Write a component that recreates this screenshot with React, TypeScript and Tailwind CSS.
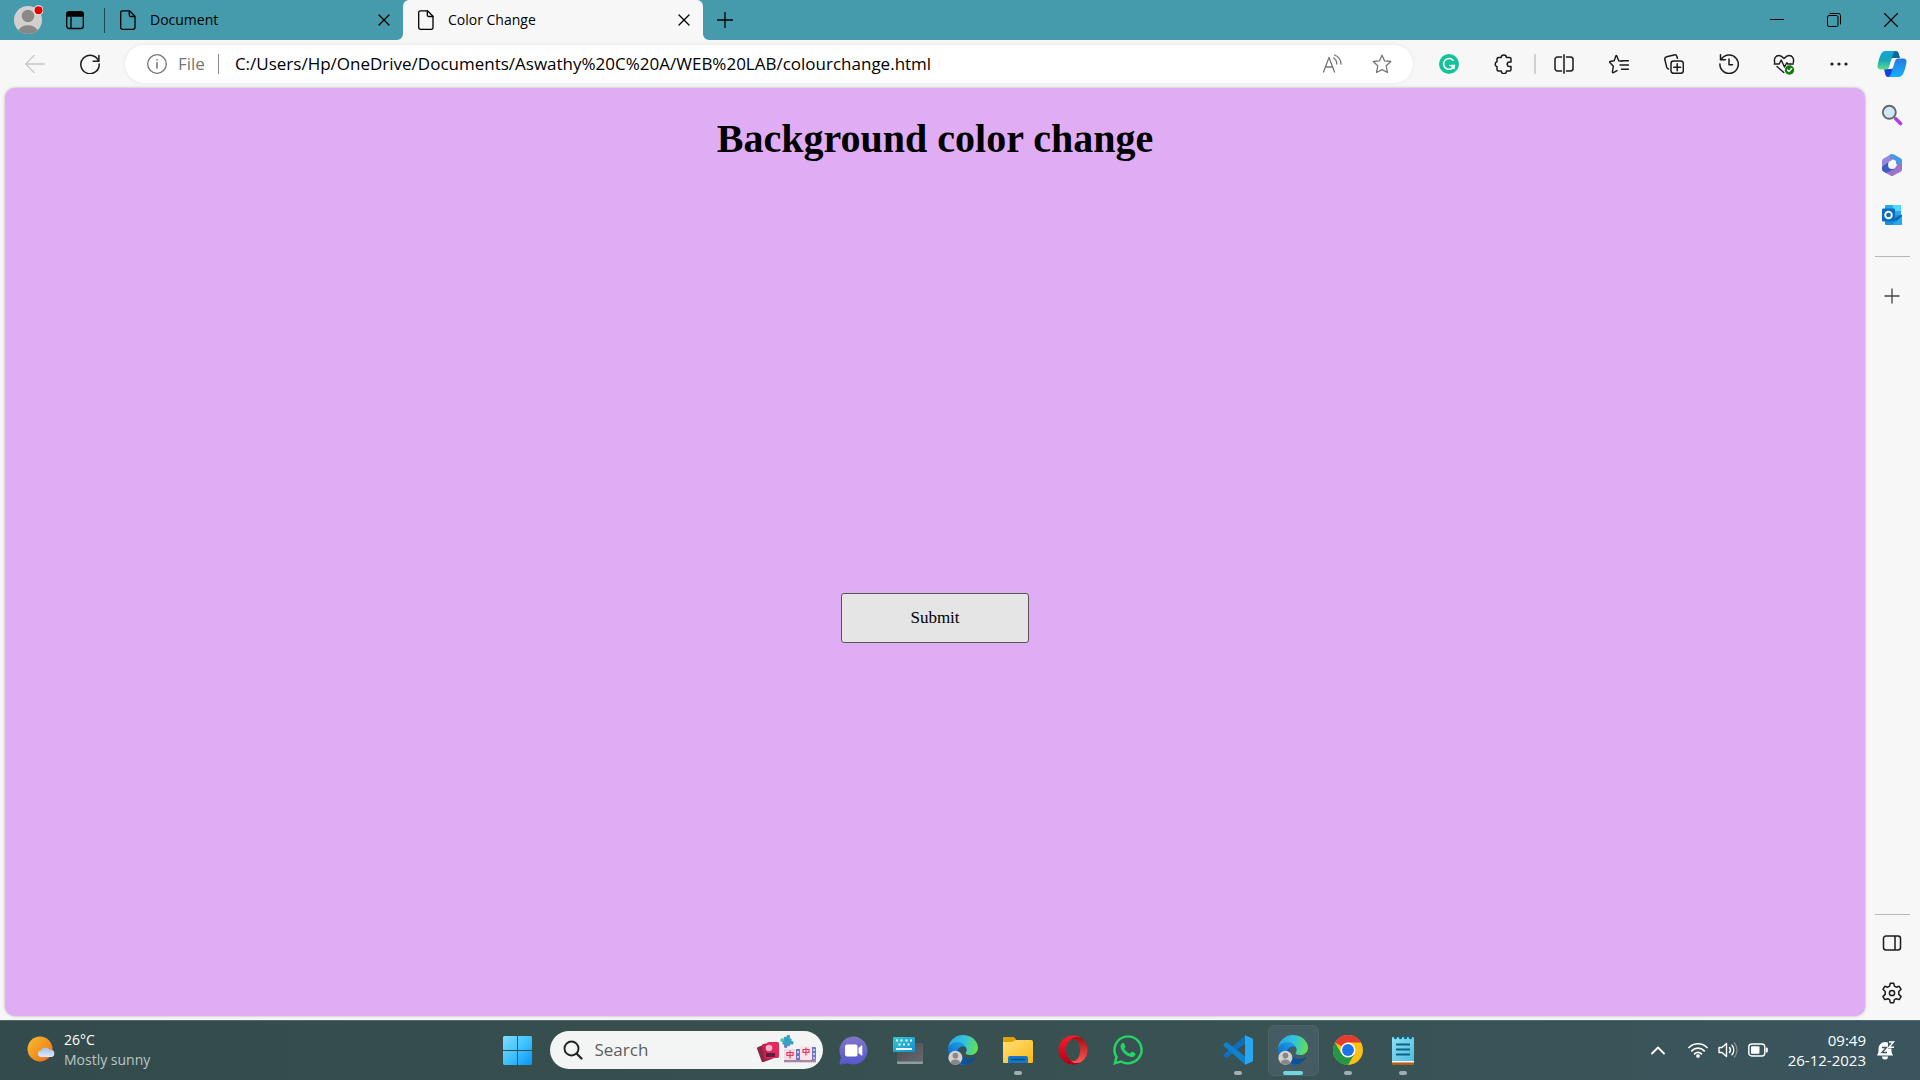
import React from "react";
import { FaWhatsapp } from "react-icons/fa";

type IconProps = { children: React.ReactNode; className?: string; box?: string };

function Line({ children, className = "size-5", box = "0 0 20 20" }: IconProps) {
  return (
    <svg
      viewBox={box}
      className={className}
      fill="none"
      stroke="currentColor"
      strokeWidth="1.3"
      strokeLinecap="round"
      strokeLinejoin="round"
      aria-hidden="true"
    >
      {children}
    </svg>
  );
}

function DocIcon() {
  return (
    <Line className="h-5 w-4" box="0 0 16 20">
      <path d="M2.500 .8h7L15 6.300v11.200a1.800 1.800 0 0 1-1.800 1.800H2.500A1.800 1.800 0 0 1 .7 17.500V2.600A1.800 1.800 0 0 1 2.500 .8z" />
      <path d="M9.300 1v4a1.500 1.500 0 0 0 1.500 1.500h4" />
    </Line>
  );
}

function CloseIcon({ className = "size-3" }: { className?: string }) {
  return (
    <Line className={className} box="0 0 12 12">
      <path d="M1 1l10 10M11 1L1 11" />
    </Line>
  );
}

function StarPath() {
  return (
    <path d="M10 1.200l2.500 5.600 6.300.7-4.600 4.300 1.300 6.700L10 15.700l-5.500 2.800 1.300-6.700L1.200 7.500l6.300-.7z" />
  );
}

function EdgeLogo({ id }: { id: string }) {
  return (
    <svg viewBox="0 0 256 256" className="size-[30px]" aria-hidden="true">
      <defs>
        <linearGradient id={id + "a"} x1="60" y1="180" x2="240" y2="180" gradientUnits="userSpaceOnUse">
          <stop offset="0" stopColor="#0c59a4" />
          <stop offset="1" stopColor="#114a8b" />
        </linearGradient>
        <linearGradient id={id + "b"} x1="140" y1="90" x2="40" y2="220" gradientUnits="userSpaceOnUse">
          <stop offset="0" stopColor="#1b9de2" />
          <stop offset=".5" stopColor="#1680d6" />
          <stop offset="1" stopColor="#0a63c9" />
        </linearGradient>
        <linearGradient id={id + "c"} x1="10" y1="60" x2="250" y2="120" gradientUnits="userSpaceOnUse">
          <stop offset="0" stopColor="#2aa9ea" />
          <stop offset=".5" stopColor="#33c3dc" />
          <stop offset="1" stopColor="#66e04c" />
        </linearGradient>
      </defs>
      <path fill={"url(#" + id + "a)"} d="M231 190.500c-3.400 1.800-6.900 3.400-10.500 4.700a101.500 101.500 0 0 1-35.900 6.500c-47.300 0-88.500-32.600-88.500-74.300a31.500 31.500 0 0 1 16.400-27.300c-42.800 1.800-53.800 46.400-53.800 72.500 0 74 68.100 81.400 82.800 81.400 7.900 0 19.800-2.300 27-4.600l1.300-.4a128.300 128.300 0 0 0 66.600-52.800 4 4 0 0 0-5.400-5.700z" />
      <path fill={"url(#" + id + "b)"} d="M105.700 241.400a79.200 79.200 0 0 1-22.700-21.300 80.700 80.700 0 0 1 29.500-120c3.200-1.500 8.500-4.100 15.600-4a32.400 32.400 0 0 1 25.700 13 31.900 31.900 0 0 1 6.300 18.700c0-.2 24.500-79.600-80-79.600-43.900 0-80 41.700-80 78.200a130.200 130.200 0 0 0 12.100 56 128 128 0 0 0 156.400 67 75.500 75.500 0 0 1-62.800-8z" />
      <path fill={"url(#" + id + "c)"} d="M152.300 148.900c-.9 1-3.400 2.500-3.400 5.600 0 2.600 1.700 5.200 4.800 7.300 14.300 10 41.400 8.600 41.500 8.600a59.600 59.600 0 0 0 30.300-8.300 61.400 61.400 0 0 0 30.400-52.900c.3-22.400-8-37.300-11.300-43.900C223.300 23.900 177.700 0 128 0A128 128 0 0 0 0 126.200c.5-36.500 36.800-66 80-66 3.500 0 23.500.3 42 10a72.600 72.600 0 0 1 30.900 29.300c6.100 10.600 7.200 24.100 7.200 29.500s-2.700 13.300-7.800 19.900z" />
      <circle cx="63" cy="194" r="60" fill="#d2d0ce" />
      <circle cx="63" cy="176" r="24" fill="#8a8886" />
      <path fill="#8a8886" d="M22 237a42 36 0 0 1 82 0 60 60 0 0 1-82 0z" />
    </svg>
  );
}

function BarButton({ label, children }: { label: string; children: React.ReactNode }) {
  return (
    <button type="button" aria-label={label} className="flex h-10 w-[55px] shrink-0 items-center justify-center">
      {children}
    </button>
  );
}

function TabBar() {
  return (
    <header className="flex h-10 items-stretch bg-[#459aac] text-black">
      <button type="button" aria-label="Profile" className="flex w-14 items-center justify-center">
        <svg viewBox="0 0 30 30" className="size-[30px]" aria-hidden="true">
          <circle cx="15" cy="15" r="14" fill="#d2d0ce" />
          <circle cx="15" cy="11" r="6.200" fill="#8a8886" />
          <path d="M5.500 25.200a10.500 8.500 0 0 1 19 0 14 14 0 0 1-19 0z" fill="#8a8886" />
          <circle cx="25.500" cy="5.200" r="5" fill="#f5f5f5" />
          <circle cx="25.500" cy="5.200" r="4" fill="#e60000" />
        </svg>
      </button>
      <button type="button" aria-label="Tab actions" className="flex w-[38px] items-center justify-center">
        <Line>
          <rect x="1.700" y="2" width="16.600" height="16.500" rx="2.500" />
          <path d="M1.700 6V4.500A2.500 2.500 0 0 1 4.200 2h11.600a2.500 2.500 0 0 1 2.500 2.500V6z" fill="currentColor" />
          <path d="M6 7v11" />
        </Line>
      </button>
      <div className="ml-[10px] h-[25px] w-px self-center bg-[#1d4a55]" />
      <div className="flex w-[298px] items-center pl-[15px] pr-[13px]">
        <DocIcon />
        <span className="ml-3.5 flex-1 text-sm">Document</span>
        <button type="button" aria-label="Close Document"><CloseIcon /></button>
      </div>
      <div className="relative flex w-[300px] items-center rounded-t-md bg-[#f7f7f7] pl-[15px] pr-[13px]">
        <DocIcon />
        <span className="ml-3.5 flex-1 text-sm">Color Change</span>
        <button type="button" aria-label="Close Color Change"><CloseIcon /></button>
        <svg viewBox="0 0 6 6" className="absolute -left-[6px] bottom-0 size-[6px]" aria-hidden="true">
          <path d="M6 0v6H0a6 6 0 0 0 6-6z" fill="#f7f7f7" />
        </svg>
        <svg viewBox="0 0 6 6" className="absolute -right-[6px] bottom-0 size-[6px]" aria-hidden="true">
          <path d="M0 0v6h6a6 6 0 0 1-6-6z" fill="#f7f7f7" />
        </svg>
      </div>
      <button type="button" aria-label="New tab" className="flex w-[43px] items-center justify-center">
        <Line className="size-4" box="0 0 16 16"><path d="M8 .500v15M.500 8h15" /></Line>
      </button>
      <div className="ml-auto flex pr-px">
        <button type="button" aria-label="Minimize" className="flex w-[57px] items-center justify-center">
          <Line className="size-[14px]" box="0 0 14 14"><path d="M.500 6.500h13" strokeWidth="1" /></Line>
        </button>
        <button type="button" aria-label="Restore" className="flex w-[57px] items-center justify-center">
          <Line className="size-[14px]" box="0 0 14 14">
            <g strokeWidth="1">
              <rect x=".500" y="2.500" width="10.500" height="11" rx="1.500" />
              <path d="M3 .500h8.500a2 2 0 0 1 2 2V11" />
            </g>
          </Line>
        </button>
        <button type="button" aria-label="Close window" className="flex w-[57px] items-center justify-center">
          <Line className="size-[14px]" box="0 0 14 14"><path d="M.500 .500l13 13M13.500 .500l-13 13" strokeWidth="1.100" /></Line>
        </button>
      </div>
    </header>
  );
}

function Toolbar() {
  return (
    <nav aria-label="Browser toolbar" className="flex h-12 items-center bg-[#f7f7f7] pl-2 text-[#1b1b1b]">
      <div className="flex w-[117px] text-[#1b1b1b]">
        <button type="button" aria-label="Back" className="flex w-[54px] items-center justify-center text-[#c8c8c8]">
          <Line><path d="M19.500 10H1M9 1.500L.8 10 9 18.500" /></Line>
        </button>
        <button type="button" aria-label="Refresh" className="flex w-14 items-center justify-center">
          <Line>
            <path d="M18.600 7.200A9.200 9.200 0 1 0 19.200 10" strokeWidth="1.500" />
            <path d="M18.900 1.500v5.700h-5.700" strokeWidth="1.500" />
          </Line>
        </button>
      </div>
      <div className="flex h-[38px] flex-1 items-center rounded-full bg-white pl-[22px] pr-[21px] text-[#767676] shadow-[0_0_4px_rgba(0,0,0,0.08)]">
        <Line>
          <circle cx="10" cy="10" r="9.300" />
          <path d="M10 8.800v5.200M10 5.800v.2" strokeWidth="1.600" />
        </Line>
        <label htmlFor="address" className="ml-[11px] text-[17px]">File</label>
        <div className="ml-[13px] h-5 w-px bg-[#8a8a8a]" />
        <input
          id="address"
          type="text"
          defaultValue="C:/Users/Hp/OneDrive/Documents/Aswathy%20C%20A/WEB%20LAB/colourchange.html"
          className="ml-4 min-w-0 flex-1 bg-transparent text-[17px] text-black outline-none"
        />
        <button type="button" aria-label="Read aloud" className="mr-[30px]">
          <Line>
            <path d="M1.500 18L7 3.500 12.500 18M3.300 13h7.500" />
            <path d="M11.500 4a7 7 0 0 1 3.300 6M12.500 1a10 10 0 0 1 6.500 9" />
          </Line>
        </button>
        <button type="button" aria-label="Add to favorites"><Line><StarPath /></Line></button>
      </div>
      <div className="ml-2 flex items-center">
        <BarButton label="Grammarly">
          <svg viewBox="0 0 20 20" className="size-5" aria-hidden="true">
            <circle cx="10" cy="10" r="10" fill="#15c39a" />
            <path d="M14 6.200A5.400 5.400 0 1 0 15.200 11.500H10.800" fill="none" stroke="#fff" strokeWidth="1.600" strokeLinecap="round" />
            <path d="M11 11.200h4.700v4.600z" fill="#fff" />
          </svg>
        </BarButton>
        <BarButton label="Extensions">
          <Line>
            <path strokeWidth="1.500" d="M7.200 3.500a2.600 2.600 0 0 1 5.200 0h3.100a1.500 1.500 0 0 1 1.500 1.500v3h-1.500a2.300 2.300 0 0 0 0 4.600H17v3a1.500 1.500 0 0 1-1.500 1.500h-3a2.600 2.600 0 0 1-5.200 0H4.500A1.500 1.500 0 0 1 3 15.600v-3a2.500 2.500 0 0 1 0-4.800V5a1.500 1.500 0 0 1 1.500-1.500z" />
          </Line>
        </BarButton>
        <div className="ml-[3px] h-5 w-0.5 bg-[#d0d0d0]" />
        <BarButton label="Split screen">
          <Line>
            <path strokeWidth="1.500" d="M7.500 3H3.500A2.500 2.500 0 0 0 1 5.500v9A2.500 2.500 0 0 0 3.500 17h4M12.500 3h4A2.500 2.500 0 0 1 19 5.500v9a2.500 2.500 0 0 1-2.500 2.500h-4M10 .800v18.400" />
          </Line>
        </BarButton>
        <BarButton label="Favorites">
          <Line>
            <path strokeWidth="1.400" d="M13 7.200L9.700 6.800 7.800 2Q7.300 .8 6.800 2L5.200 6.800 1 7.500Q.3 7.800 .8 8.400l3.600 3.800-1 5.600q0 1.200 1 .8L8 16.600M13 6.800h6.500M11 11h8.500M12.500 15.200h7" />
          </Line>
        </BarButton>
        <BarButton label="Collections">
          <Line>
            <rect x="7" y="7" width="12.300" height="12.300" rx="2.500" strokeWidth="1.500" />
            <path strokeWidth="1.500" d="M13.200 9.700v7M9.700 13.200h7M4.500 15a2.500 2.500 0 0 1-1.800-1.900L.900 5.800A2.500 2.500 0 0 1 2.700 2.800L10 .9a2.500 2.500 0 0 1 3 1.800l.4 1.500" />
          </Line>
        </BarButton>
        <BarButton label="History">
          <Line>
            <path strokeWidth="1.500" d="M2.500 5A9.200 9.200 0 1 1 .9 10M1.500 .8v4.900h4.900M10 5v5.800h3.500" />
          </Line>
        </BarButton>
        <BarButton label="Browser essentials">
          <Line className="size-[22px]" box="0 0 22 22">
            <path strokeWidth="1.400" d="M1.700 9.500C.6 5 3 2.500 5.800 2.500c2.200 0 3.600 1.200 5.200 3 1.600-1.800 3-3 5.200-3 2.800 0 5.200 2.500 4.100 7M1.200 11h5l2-4 3.300 7 2.300-4.200 1 1.200h5.500M4 13.500l6.800 6" />
            <circle cx="16.500" cy="17" r="4.700" fill="#107c10" stroke="none" />
            <path stroke="#fff" d="M14.500 17l1.500 1.500 2.700-3" />
          </Line>
        </BarButton>
        <BarButton label="Settings and more">
          <svg viewBox="0 0 20 20" className="size-5" fill="currentColor" aria-hidden="true">
            <circle cx="3" cy="10" r="1.600" /><circle cx="10" cy="10" r="1.600" /><circle cx="17" cy="10" r="1.600" />
          </svg>
        </BarButton>
        <button type="button" aria-label="Copilot" className="mr-0.5 flex w-[52px] justify-center">
          <svg viewBox="0 0 30 28" className="h-7 w-[30px]" aria-hidden="true">
            <defs>
              <linearGradient id="cpA" x1="0" y1="0" x2="0" y2="1">
                <stop offset="0" stopColor="#0ea5dc" /><stop offset=".5" stopColor="#17a6b8" /><stop offset="1" stopColor="#5fdc8b" />
              </linearGradient>
              <linearGradient id="cpB" x1="0" y1="0" x2="0" y2="1">
                <stop offset="0" stopColor="#2b78dc" /><stop offset="1" stopColor="#13b0ff" />
              </linearGradient>
            </defs>
            <path d="M15 1h4q2 0 2.600 2l1.400 5h-7q-2 0-3 2z" fill="#0d6a92" />
            <path d="M15 27h-4q-2 0-2.600-2L7 19h7q2 0 3-2z" fill="#1645d8" />
            <path d="M8 1h11q-2 0-3 3l-4 13q-.7 2.500-3 2.500H4q-4 0-3.500-4Q1.500 9 4 4q1.500-3 4-3z" fill="url(#cpA)" />
            <path d="M22 27H11q2 0 3-3l4-13q.7-2.500 3-2.500h5q4 0 3.500 4Q28.500 19 26 24q-1.500 3-4 3z" fill="url(#cpB)" />
          </svg>
        </button>
      </div>
    </nav>
  );
}

function SideButton({ label, children }: { label: string; children: React.ReactNode }) {
  return (
    <button type="button" aria-label={label} className="flex h-[50px] w-full items-center justify-center">
      {children}
    </button>
  );
}

function Sidebar() {
  return (
    <aside className="flex w-[55px] shrink-0 flex-col items-center pb-0.5 pr-px pt-0.5 text-[#1b1b1b]">
      <SideButton label="Search">
        <svg viewBox="0 0 22 22" className="size-[22px]" aria-hidden="true">
          <path d="M12.500 12.500l3 3" stroke="#777" strokeWidth="2" />
          <path d="M15 15l4.500 4.500" stroke="#b83af0" strokeWidth="3.600" strokeLinecap="round" />
          <circle cx="8.300" cy="8.300" r="6.500" fill="#cfe8f8" stroke="#686868" strokeWidth="1.900" />
        </svg>
      </SideButton>
      <SideButton label="Microsoft 365">
        <svg viewBox="0 0 22 24" className="h-6 w-[22px]" aria-hidden="true">
          <path d="M10 1.200L2 6Q1 6.700 1 8v9l4.500 3V10.500L14 5z" fill="#9a83dc" />
          <path d="M9 1.500q2-1 4 0l7 4q1 .8 1 2V15l-6-4V8L9.500 5z" fill="#459ae6" />
          <path d="M21 11v5.500q0 1.200-1 2l-7.500 4q-1.500 1-3 0L4 19.500l9-3.500 4-5z" fill="#9c74cc" />
          <path d="M1 14V16q0 1.500 1 2.200l3 1.800 9-4-6-3.500L7.500 9 5 10.800z" fill="#3e5cc0" />
          <circle cx="11" cy="12" r="3.900" fill="#f7f7f7" />
        </svg>
      </SideButton>
      <SideButton label="Outlook">
        <svg viewBox="0 0 22 22" className="size-[22px]" aria-hidden="true">
          <rect x="4" y="1" width="16" height="12" rx="1" fill="#28a8ea" />
          <path d="M12 1h7a1 1 0 0 1 1 1v5h-8z" fill="#50d9ff" />
          <path d="M4 11h17v9a1 1 0 0 1-1 1H5a1 1 0 0 1-1-1z" fill="#1490df" />
          <path d="M21 10.500v10L13 15z" fill="#0f5fa8" />
          <path d="M21 12v8.500a1 1 0 0 1-1 .5h-9z" fill="#28a8ea" />
          <rect x="1" y="4.500" width="13" height="13" rx="1.200" fill="#0a6cbd" />
          <circle cx="7.500" cy="11" r="3.300" fill="none" stroke="#fff" strokeWidth="1.900" />
        </svg>
      </SideButton>
      <div className="mb-3.5 mt-4 h-px w-[35px] bg-[#b8b8b8]" />
      <SideButton label="Customize sidebar">
        <Line className="size-4" box="0 0 16 16"><path d="M8 1v14M1 8h14" stroke="#444" /></Line>
      </SideButton>
      <div className="mb-[3px] mt-auto h-px w-[35px] bg-[#b8b8b8]" />
      <SideButton label="Hide sidebar">
        <Line>
          <path strokeWidth="1.500" d="M4 3h12a2.500 2.500 0 0 1 2.500 2.500v9A2.500 2.500 0 0 1 16 17H4a2.500 2.500 0 0 1-2.500-2.500v-9A2.500 2.500 0 0 1 4 3zM13 3v14" />
        </Line>
      </SideButton>
      <SideButton label="Settings">
        <Line className="size-[22px]" box="0 0 22 22">
          <g strokeWidth="1.500">
            <circle cx="11" cy="11" r="2.600" />
            <path d="M9.300 1.200h3.400l.7 3 1.800 1 3-.9 1.900 3-2.300 2.200v2.900l2.300 2.200-1.900 3-3-.9-1.800 1-.7 3H9.300l-.7-3-1.800-1-3 .9-1.900-3 2.300-2.200V9.500L1.900 7.300l1.900-3 3 .9 1.800-1z" />
          </g>
        </Line>
      </SideButton>
    </aside>
  );
}

function TaskItem({ label, mark, children }: { label: string; mark?: "open" | "active"; children: React.ReactNode }) {
  return (
    <button
      type="button"
      aria-label={label}
      className={
        mark === "active"
          ? "relative mx-[2px] flex h-[51px] w-[51px] items-center justify-center rounded-md border border-[#4c6468] bg-[#455d62]"
          : "relative flex h-[51px] w-[55px] items-center justify-center"
      }
    >
      {children}
      {mark === "open" && <span className="absolute bottom-px h-1 w-2 rounded-full bg-[#a3adaf]" />}
      {mark === "active" && <span className="absolute bottom-0 h-1 w-5 rounded-full bg-[#74d3dc]" />}
    </button>
  );
}

function Taskbar() {
  return (
    <footer className="flex h-[60px] items-center bg-linear-to-r from-[#334b4c] via-[#38504f] to-[#3a555e] text-white shadow-[inset_0_1px_0_#50686b]">
      <div className="flex flex-1 items-center pl-6">
        <svg viewBox="0 0 28 28" className="ml-[3px] size-7" aria-hidden="true">
          <defs>
            <linearGradient id="sun" x1="0" y1="0" x2="1" y2="1">
              <stop offset="0" stopColor="#f6c02f" /><stop offset="1" stopColor="#f06a12" />
            </linearGradient>
            <linearGradient id="cloud" x1="0" y1="0" x2="0" y2="1">
              <stop offset="0" stopColor="#9fc0f0" /><stop offset="1" stopColor="#dfe9fb" />
            </linearGradient>
          </defs>
          <circle cx="13" cy="13" r="12.500" fill="url(#sun)" />
          <path d="M13.500 21a3.300 3.300 0 0 1 .5-6.500 5 5 0 0 1 9-.5 3.500 3.500 0 0 1 1.500 7z" fill="url(#cloud)" />
        </svg>
        <div className="ml-[9px] text-sm leading-5">
          <p>26°C</p>
          <p className="text-[#bcc6c8]">Mostly sunny</p>
        </div>
      </div>
      <div className="flex items-center">
        <TaskItem label="Start">
          <svg viewBox="0 0 29 29" className="size-[29px]" aria-hidden="true">
            <defs>
              <linearGradient id="win" x1="0" y1="0" x2="29" y2="29" gradientUnits="userSpaceOnUse">
                <stop offset="0" stopColor="#80dcff" /><stop offset=".5" stopColor="#3fc3fd" /><stop offset="1" stopColor="#0a94f8" />
              </linearGradient>
            </defs>
            <path fill="url(#win)" d="M1 0h13v14H0V1zM15 0h13l1 1v13H15zM0 15h14v14H1l-1-1zM15 15h14v13l-1 1H15z" />
          </svg>
        </TaskItem>
        <div className="ml-[5px] mr-[3px] flex h-[38px] w-[273px] items-center rounded-full bg-[#f3f5f5] pl-[13px] pr-[6px]">
          <svg viewBox="0 0 20 20" className="size-5" fill="none" stroke="#222" strokeWidth="1.900" strokeLinecap="round" aria-hidden="true">
            <circle cx="8.500" cy="8.500" r="7" /><path d="M13.500 13.500l5 5" strokeWidth="2.200" />
          </svg>
          <input
            type="text"
            aria-label="Search"
            placeholder="Search"
            className="ml-3 min-w-0 flex-1 bg-transparent text-[17px] text-black outline-none placeholder:text-[#5d5d5d]"
          />
          <svg viewBox="0 0 60 30" className="h-[30px] w-[60px]" aria-hidden="true">
            <rect x="2" y="10" width="12" height="16" rx="1.500" fill="#8d2546" transform="rotate(-20 8 18)" />
            <rect x="6" y="8" width="12" height="16" rx="1.500" fill="#c92050" transform="rotate(-10 12 16)" />
            <rect x="10" y="7" width="12" height="16" rx="1.500" fill="#e3285a" />
            <circle cx="12" cy="13" r="3.300" fill="#f6b6cc" />
            <path d="M9 18h9v4h-9z" fill="#5c2140" />
            <g transform="translate(30 6.500) rotate(15)" fill="#37a3c4">
              <rect x="-4" y="-4" width="8" height="8" rx="1" />
              <circle cx="-5" cy="0" r="1.800" fill="#4fc2a4" />
              <circle cx="5" cy="0" r="1.800" />
              <circle cx="0" cy="-5" r="1.800" />
              <circle cx="0" cy="5" r="1.800" fill="#6c7bd8" />
            </g>
            <rect x="39" y="14" width="6" height="11" fill="#6d75c9" />
            <rect x="53" y="12" width="6" height="13" rx="1" fill="#6d75c9" />
            <rect x="27" y="14" width="12" height="11" rx="1" fill="#f0dce4" />
            <rect x="43" y="11" width="12" height="14" rx="1" fill="#f6e6ec" />
            <path d="M27 25h32v2.300H27z" fill="#a9859e" />
            <path d="M30 17.500h6v3h-6zM33 15.500v8M46 14.500h6v3h-6zM49 12.500v8" stroke="#e8385f" strokeWidth="1.200" fill="none" />
            <g fill="#f6e6ec">
              <circle cx="41" cy="17" r="1" /><circle cx="41" cy="22" r="1" />
              <circle cx="57" cy="15" r="1" /><circle cx="57" cy="19" r="1" /><circle cx="57" cy="23" r="1" />
            </g>
          </svg>
        </div>
        <TaskItem label="Chat">
          <svg viewBox="0 0 29 29" className="size-[29px]" aria-hidden="true">
            <defs>
              <linearGradient id="chat" x1="0" y1="0" x2="0" y2="1">
                <stop offset="0" stopColor="#8177c8" /><stop offset="1" stopColor="#5558cf" />
              </linearGradient>
            </defs>
            <path fill="url(#chat)" d="M14.500.500a14 14 0 1 1-6 26.700L1.500 28.500q-1.300.1-1-1L2 21A14 14 0 0 1 14.500.500z" />
            <rect x="6" y="8.500" width="12.500" height="12" rx="2" fill="#fff" />
            <path d="M19.500 12l3-2.500q.8-.3.800.6v9q0 .8-.8.400L19.500 17z" fill="#fff" />
          </svg>
        </TaskItem>
        <TaskItem label="Touch keyboard">
          <svg viewBox="0 0 30 28" className="h-7 w-[30px]" aria-hidden="true">
            <defs>
              <linearGradient id="kb" x1="0" y1="0" x2="1" y2="1">
                <stop offset="0" stopColor="#32c9ca" /><stop offset="1" stopColor="#128fd2" />
              </linearGradient>
              <linearGradient id="kb2" x1="0" y1="0" x2="1" y2="1">
                <stop offset="0" stopColor="#484a50" /><stop offset="1" stopColor="#686b70" />
              </linearGradient>
            </defs>
            <rect x="4" y="7" width="26" height="21" rx="1.500" fill="url(#kb2)" />
            <path d="M4 25.500h26V27a1 1 0 0 1-1 1H5a1 1 0 0 1-1-1z" fill="#8f9ca0" />
            <rect x="0" y="1" width="22" height="15" rx="1.300" fill="url(#kb)" />
            <path d="M3 4.500h2M7.500 4.500h2M12.500 4.500h2M17 4.500h2M5.500 8.500h2M10 8.500h2M14.500 8.500h2" stroke="#fff" strokeWidth="2" />
            <path d="M3 13h16" stroke="#fff" strokeWidth="1.800" />
          </svg>
        </TaskItem>
        <TaskItem label="Edge profile"><EdgeLogo id="e1" /></TaskItem>
        <TaskItem label="File Explorer" mark="open">
          <svg viewBox="0 0 30 28" className="h-7 w-[30px]" aria-hidden="true">
            <defs>
              <linearGradient id="fold" x1="0" y1="0" x2="1" y2="1">
                <stop offset="0" stopColor="#ffe07a" /><stop offset="1" stopColor="#fdb813" />
              </linearGradient>
            </defs>
            <path d="M0 8V2q0-1 1-1h9q1 0 2 1l2 3v3z" fill="#e0a008" />
            <path d="M0 6h9l4-2h15q2 0 2 2v20q0 1-1 1H1q-1 0-1-1z" fill="url(#fold)" />
            <path d="M5 27v-5q0-2 2-2h16q2 0 2 2v5z" fill="#1478c8" />
            <path d="M8.500 23.500h13" stroke="#0a4a84" strokeWidth="1.500" strokeLinecap="round" />
          </svg>
        </TaskItem>
        <TaskItem label="Opera">
          <svg viewBox="0 0 30 30" className="size-[30px]" aria-hidden="true">
            <defs>
              <linearGradient id="op1" x1="0" y1="0" x2="0" y2="1">
                <stop offset="0" stopColor="#ff1b2d" /><stop offset="1" stopColor="#b00016" />
              </linearGradient>
              <linearGradient id="op2" x1="0" y1="0" x2="0" y2="1">
                <stop offset="0" stopColor="#a80a10" /><stop offset="1" stopColor="#ff5a55" />
              </linearGradient>
            </defs>
            <path fillRule="evenodd" fill="url(#op1)" d="M15 .500a14.500 14.500 0 1 0 0 29 14.500 14.500 0 0 0 0-29zM15.500 4c4 0 6.500 5 6.500 11s-2.500 11-6.500 11-7.500-5-7.500-11S11.500 4 15.500 4z" />
            <path fill="url(#op2)" d="M12.500 4.800c1-.5 2-.8 3-.8 4 0 6.500 5 6.500 11s-2.500 11-6.500 11c-1 0-2-.3-3-.8 3 3.500 8 3.800 12 .8a14.500 14.500 0 0 0 0-22c-4-3-9-2.700-12 .8z" />
          </svg>
        </TaskItem>
        <TaskItem label="WhatsApp"><FaWhatsapp className="size-[34px] text-[#25d366]" /></TaskItem>
        <div className="w-[55px]" />
        <TaskItem label="Visual Studio Code" mark="open">
          <svg viewBox="0 0 30 30" className="size-[30px]" aria-hidden="true">
            <path d="M22 .500L.900 19q-1 1 0 2l1.500 1.500q1 .8 2 0L22 8.500z" fill="#0f6fb8" />
            <path d="M22 29.500L.900 11q-1-1 0-2l1.500-1.500q1-.8 2 0L22 21.500z" fill="#0f82cf" />
            <path d="M22 .200l7 3q1 .5 1 1.600v20.400q0 1.100-1 1.600l-7 3z" fill="#2aa7f0" />
          </svg>
        </TaskItem>
        <TaskItem label="Microsoft Edge" mark="active"><EdgeLogo id="e2" /></TaskItem>
        <TaskItem label="Google Chrome" mark="open">
          <svg viewBox="0 0 48 48" className="size-[30px]" aria-hidden="true">
            <circle cx="24" cy="24" r="24" fill="#fbc116" />
            <path d="M24 24L3.200 12A24 24 0 0 1 44.800 12H24z" fill="#e33b2e" />
            <path d="M3.200 12A24 24 0 0 0 24 48l10.400-18L24 24 13.600 30z" fill="#249645" />
            <circle cx="24" cy="24" r="12" fill="#fff" />
            <circle cx="24" cy="24" r="9.500" fill="#1a73e8" />
          </svg>
        </TaskItem>
        <TaskItem label="Notepad" mark="open">
          <svg viewBox="0 0 22 30" className="h-[30px] w-[22px]" aria-hidden="true">
            <defs>
              <linearGradient id="note" x1="0" y1="0" x2="1" y2="1">
                <stop offset="0" stopColor="#8fe0f4" /><stop offset="1" stopColor="#4dbde0" />
              </linearGradient>
            </defs>
            <rect x="0" y="24" width="22" height="6" rx="1" fill="#b35f16" />
            <rect x="0" y="22" width="22" height="5.500" fill="#f4f4f4" />
            <path d="M0 3q0-1 1-1h20q1 0 1 1v23H0z" fill="url(#note)" />
            <path d="M4 9.500h14M4 14.500h14M4 19.500h14" stroke="#0f6284" strokeWidth="1.800" />
            <g fill="#12647f"><circle cx="3.500" cy="2.500" r="1.700" /><circle cx="8.500" cy="2.500" r="1.700" /><circle cx="13.500" cy="2.500" r="1.700" /><circle cx="18.500" cy="2.500" r="1.700" /></g>
          </svg>
        </TaskItem>
      </div>
      <div className="flex flex-1 items-center justify-end pr-6">
        <button type="button" aria-label="Show hidden icons" className="mr-[23px]">
          <Line className="size-[14px]" box="0 0 14 14"><path d="M1 10.500l6-6 6 6" strokeWidth="1.800" /></Line>
        </button>
        <button type="button" aria-label="Network, volume and battery" className="mr-5 flex items-center gap-[10px]">
          <Line>
            <path strokeWidth="1.700" d="M1 7.500a12.700 12.700 0 0 1 18 0M3.800 10.800a8.700 8.700 0 0 1 12.400 0M6.600 13.800a4.800 4.800 0 0 1 6.800 0" />
            <circle cx="10" cy="16" r="1.200" fill="currentColor" />
          </Line>
          <Line>
            <path strokeWidth="1.400" d="M1 7.500h3L8.500 3.500v13L4 12.500H1zM11.500 7.500a4 4 0 0 1 0 5M14 5.200a7.500 7.500 0 0 1 0 9.600" />
            <path stroke="#80908f" d="M16.500 3a11 11 0 0 1 0 14" />
          </Line>
          <Line>
            <rect x=".8" y="4" width="16" height="12" rx="3" strokeWidth="1.400" />
            <rect x="3" y="6.300" width="8.500" height="7.400" rx="1" fill="currentColor" stroke="none" />
            <path d="M18.800 8.500v3" strokeWidth="2" />
          </Line>
        </button>
        <div className="text-right text-[15px] leading-5">
          <p>09:49</p>
          <p>26-12-2023</p>
        </div>
        <button type="button" aria-label="Notifications" className="ml-[10px]">
          <svg viewBox="0 0 20 20" className="size-5" aria-hidden="true">
            <path d="M9 2a6.500 6.500 0 0 0-6.500 6.500V12L1 15.500h16L15.500 12V8.500A6.500 6.500 0 0 0 9 2zM6 16.500h6a3 3 0 0 1-6 0z" fill="#fff" />
            <path d="M6 7.500h4.500L6 12.500h5" fill="none" stroke="#3a555e" strokeWidth="1.400" />
            <path d="M12 1h7v7.500h-7z" fill="#3a555e" />
            <path d="M13 2h4.500L13 7.200h5" fill="none" stroke="#fff" strokeWidth="1.400" />
          </svg>
        </button>
      </div>
    </footer>
  );
}

export default function App() {
  return (
    <div className="flex min-h-screen flex-col bg-[#f7f7f7] font-['Open_Sans','Noto_Sans',sans-serif]">
      <TabBar />
      <Toolbar />
      <div className="flex flex-1">
        <main className="mb-1 ml-[5px] flex flex-1 flex-col items-center rounded-[10px] bg-[#e0acf4] font-['Liberation_Serif',serif] text-black shadow-[0_0_3px_rgba(0,0,0,0.3)]">
          <h1 className="mt-7 text-[40px] font-bold leading-[46px]">Background color change</h1>
          <button type="button" className="mt-[431px] h-[50px] w-[188px] rounded-[3px] border border-[#555] bg-[#e5e5e5] text-[17px]">
            Submit
          </button>
        </main>
        <Sidebar />
      </div>
      <Taskbar />
    </div>
  );
}
